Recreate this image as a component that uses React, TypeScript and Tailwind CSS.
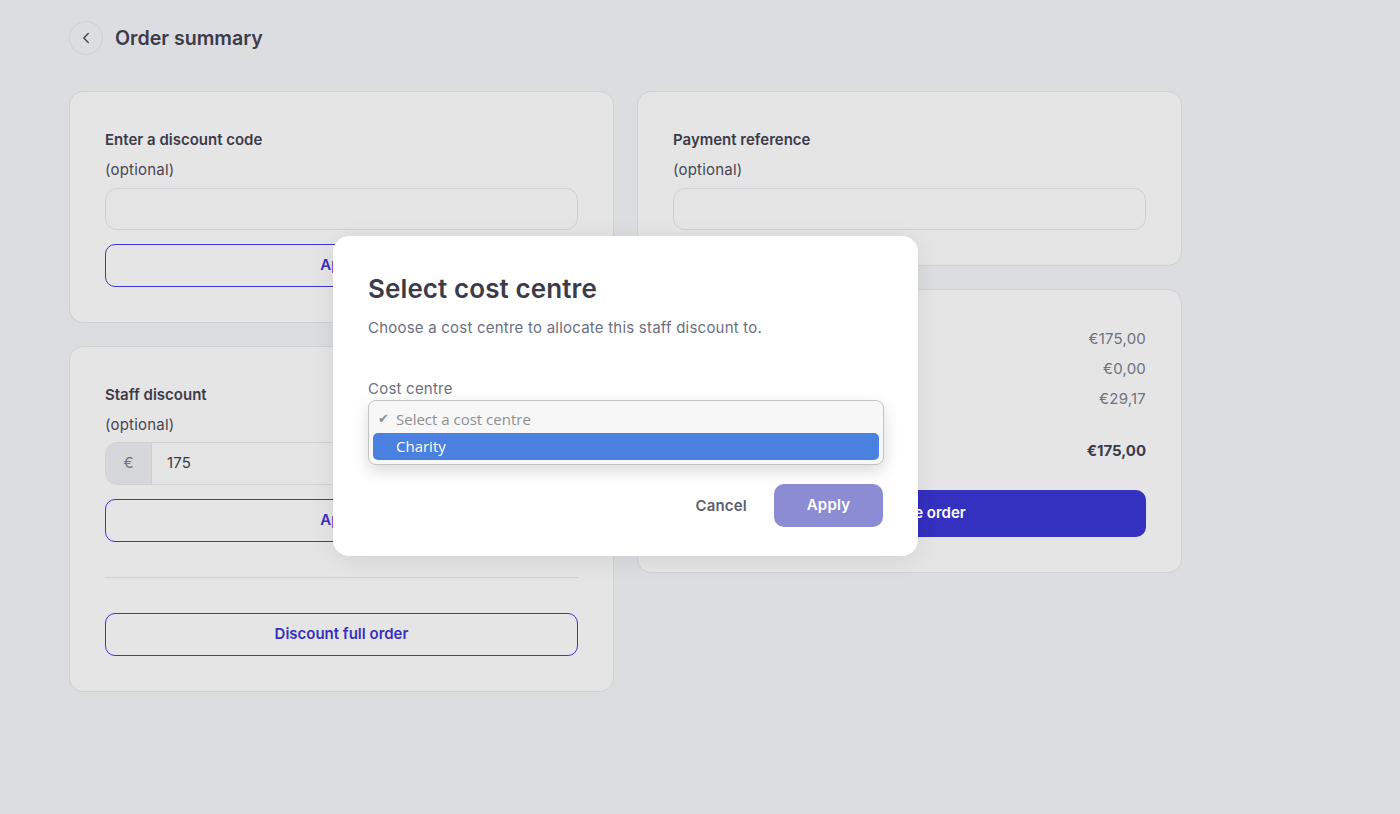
import { ChevronLeft } from 'lucide-react';

function OutlineButton({ label }: { label: string }) {
    return (
        <button className="w-full h-[43px] rounded-[10px] border border-[#3d36c8] text-[15px] font-semibold text-[#3830bd]">
            {label}
        </button>
    );
}

function FieldLabel({ title }: { title: string }) {
    return (
        <>
            <div className="text-[15px] leading-[26px] font-semibold text-[#3c3b4a]">{title}</div>
            <div className="mt-[4px] text-[15px] leading-[26px] tracking-[0.2px] text-[#474652]">(optional)</div>
        </>
    );
}

function Card({ children }: { children: React.ReactNode }) {
    return (
        <div className="rounded-[14px] border border-[#cfd0d5] bg-[#e5e5e6] p-[35px]">
            {children}
        </div>
    );
}

function SummaryRow({ label, value, bold }: { label: string; value: string; bold?: boolean }) {
    return (
        <div className={`flex justify-between text-[15px] leading-[30px] ${bold ? 'font-bold text-[#3c3b4a]' : 'tracking-[0.2px] text-[#6f7181]'}`}>
            <span>{label}</span>
            <span>{value}</span>
        </div>
    );
}

export default function App() {
    return (
        <div className="min-h-[814px] bg-[#dcdde1] font-['Inter',sans-serif] relative">
            <div className="px-[69px] pt-[21px]">
                {/* Header */}
                <div className="flex items-center gap-3">
                    <button className="w-[34px] h-[34px] rounded-full border border-[#cdced3] flex items-center justify-center text-[#3c3b4a]">
                        <ChevronLeft size={18} strokeWidth={1.75} />
                    </button>
                    <h1 className="mt-[2px] text-[19.6px] font-semibold text-[#3c3b4a]">Order summary</h1>
                </div>

                <div className="mt-[36px] grid grid-cols-[545px_545px] gap-x-[23px] items-start">
                    {/* Left column */}
                    <div className="flex flex-col gap-[23px]">
                        <Card>
                            <FieldLabel title="Enter a discount code" />
                            <input className="mt-[5px] w-full h-[42px] rounded-[12px] border border-[#cfd0d5] bg-[#e5e5e6] outline-none" />
                            <div className="mt-[14px]">
                                <OutlineButton label="Apply" />
                            </div>
                        </Card>
                        <Card>
                            <FieldLabel title="Staff discount" />
                            <div className="mt-[4px] flex h-[43px] rounded-[12px] border border-[#cfd0d5] overflow-hidden">
                                <div className="w-[46px] bg-[#d6d7db] border-r border-[#cfd0d5] flex items-center justify-center text-[15px] text-[#6f7181]">€</div>
                                <div className="flex-1 flex items-center pl-[15px] text-[15px] tracking-[0.2px] text-[#3c3b4a]">175</div>
                            </div>
                            <div className="mt-[14px]">
                                <OutlineButton label="Apply" />
                            </div>
                            <div className="mt-[35px] h-px bg-[#cfd0d5]"></div>
                            <div className="mt-[35px]">
                                <OutlineButton label="Discount full order" />
                            </div>
                        </Card>
                    </div>

                    {/* Right column */}
                    <div className="flex flex-col gap-[23px]">
                        <Card>
                            <FieldLabel title="Payment reference" />
                            <input className="mt-[5px] w-full h-[42px] rounded-[12px] border border-[#cfd0d5] bg-[#e5e5e6] outline-none" />
                        </Card>
                        <div className="rounded-[14px] border border-[#cfd0d5] bg-[#e5e5e6] px-[35px] pt-[34px] pb-[35px]">
                            <SummaryRow label="Subtotal" value="€175,00" />
                            <SummaryRow label="Discount" value="€0,00" />
                            <SummaryRow label="VAT" value="€29,17" />
                            <div className="mt-[22px]">
                                <SummaryRow label="Total" value="€175,00" bold />
                            </div>
                            <button className="mt-[24px] w-full h-[47px] rounded-[10px] bg-[#3430c0] text-white text-[15px] font-semibold">
                                Complete order
                            </button>
                        </div>
                    </div>
                </div>
            </div>

            {/* Modal */}
            <div className="absolute inset-0 pl-[333px] pt-[236px]">
                <div className="w-[585px] h-[320px] rounded-[16px] bg-white shadow-[0_4px_24px_rgba(0,0,0,0.08)] px-[35px] pt-[37px]">
                    <h2 className="text-[26px] leading-8 font-semibold tracking-[0.1px] text-[#3c3b4a]">Select cost centre</h2>
                    <p className="mt-[12px] text-[15px] leading-[22px] tracking-[0.22px] text-[#6c6f82]">Choose a cost centre to allocate this staff discount to.</p>
                    <div className="mt-[39px] text-[15px] leading-[22px] tracking-[0.22px] text-[#6c6f82]">Cost centre</div>
                    <div className="relative h-[42px]">
                        <div className="absolute left-0 top-0 w-[516px] rounded-[8px] border border-[#c4c4c6] bg-[#f7f7f7] shadow-[0_6px_16px_rgba(0,0,0,0.15)] p-[4px] font-['Open_Sans',sans-serif]">
                            <div className="h-[28px] flex items-center text-[15px] text-[#8f8f92]">
                                <span className="w-[23px] pl-[5px] text-[13px] text-[#8f8f92]">✔</span>
                                <span>Select a cost centre</span>
                            </div>
                            <div className="h-[27px] flex items-center rounded-[5px] bg-[#4a80df] text-[15px] text-white">
                                <span className="w-[23px]"></span>
                                <span>Charity</span>
                            </div>
                        </div>
                    </div>
                    <div className="mt-[42px] flex justify-end items-center gap-[27px]">
                        <button className="pt-[2px] text-[15px] font-semibold tracking-[0.2px] text-[#5c5f70]">Cancel</button>
                        <button className="w-[109px] h-[43px] rounded-[10px] bg-[#8c8cd5] text-white text-[15px] font-semibold tracking-[0.2px]">Apply</button>
                    </div>
                </div>
            </div>
        </div>
    );
}
